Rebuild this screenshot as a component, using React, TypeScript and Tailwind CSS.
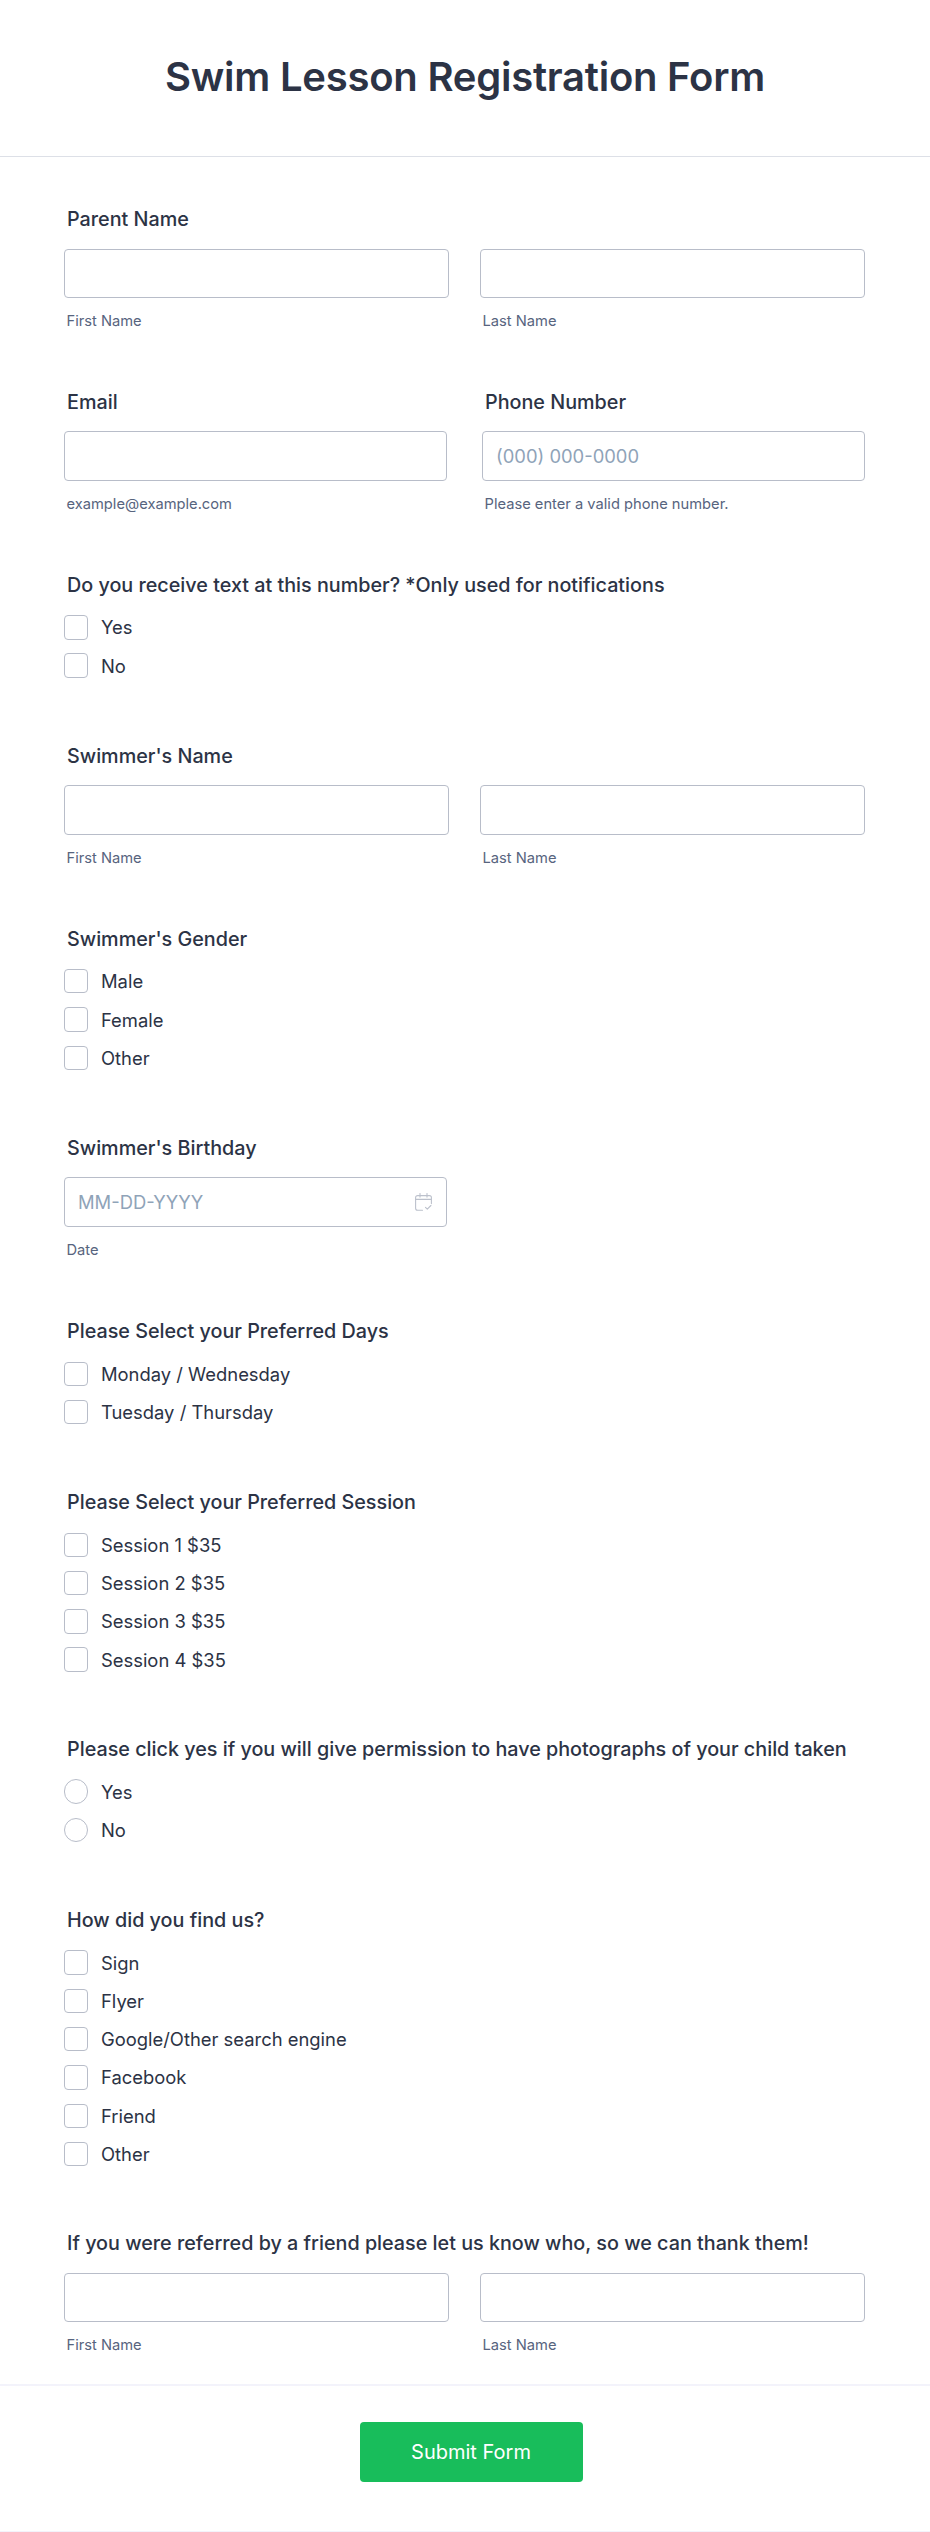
import React from "react";

const Label = ({ children, className = "" }: { children: React.ReactNode; className?: string }) => (
  <div className={`h-6 pl-[3px] text-[19.75px] leading-6 font-medium text-[#2c3345] whitespace-nowrap ${className}`}>{children}</div>
);

const Sub = ({ children }: { children: React.ReactNode }) => (
  <div className="mt-[13px] h-5 pl-[2.5px] text-[14.7px] leading-5 text-[#57647e] whitespace-nowrap">{children}</div>
);

const Input = ({ placeholder, children }: { placeholder?: string; children?: React.ReactNode }) => (
  <div className="mt-[17.5px] flex h-[49.4px] items-center justify-between rounded border border-[#b8bdc9] bg-white px-[13px] text-[18.4px] leading-6 text-[#8fa3b8]">
    <span>{placeholder}</span>
    {children}
  </div>
);

const NameRow = ({ className = "", title }: { className?: string; title: string }) => (
  <section className={className}>
    <Label>{title}</Label>
    <div className="grid grid-cols-[385px_385px] gap-x-[31px]">
      <div>
        <Input />
        <Sub>First Name</Sub>
      </div>
      <div>
        <Input />
        <Sub>Last Name</Sub>
      </div>
    </div>
  </section>
);

const Options = ({ items, round = false }: { items: string[]; round?: boolean }) => (
  <div className="mt-[18.5px] -mb-[0.4px] flex flex-col gap-[13.9px]">
    {items.map((item) => (
      <div key={item} className="flex h-[24.4px] items-center gap-[12.6px]">
        <span className={`h-[24.4px] w-[24.4px] border border-[#b8bdc9] bg-white ${round ? "rounded-full" : "rounded"}`} />
        <span className="text-[18.4px] leading-6 text-[#2c3345]">{item}</span>
      </div>
    ))}
  </div>
);

const CalendarIcon = () => (
  <svg width="17" height="18" viewBox="0 0 17 18" fill="none" stroke="#bcc1cc" strokeWidth="1.1" strokeLinecap="round" strokeLinejoin="round" className="mr-[1px]">
    <path d="M7.5 17.2H2.6a2 2 0 0 1-2-2V4.6a2 2 0 0 1 2-2h11.8a2 2 0 0 1 2 2v6" />
    <path d="M.6 6.4h15.8M5 .5v3.6M12 .5v3.6" />
    <path d="M10.5 14.3l1.8 1.9 3.6-3.7" />
  </svg>
);

export default function App() {
  return (
    <div className="min-h-[2532px] bg-white font-['Inter',sans-serif]">
      <header className="flex h-[157px] items-center justify-center border-b border-[#dde0e7] pb-[3px]">
        <h1 className="text-[40px] leading-[48px] font-semibold tracking-[-0.24px] text-[#2c3345]">Swim Lesson Registration Form</h1>
      </header>

      <main className="px-[64px]">
        <NameRow title="Parent Name" className="pt-[50px]" />

        <section className="mt-[59px] grid grid-cols-[383px_383px] gap-x-[35px]">
          <div>
            <Label>Email</Label>
            <Input />
            <Sub>example@example.com</Sub>
          </div>
          <div>
            <Label>Phone Number</Label>
            <Input placeholder="(000) 000-0000" />
            <Sub>Please enter a valid phone number.</Sub>
          </div>
        </section>

        <section className="mt-[58.9px]">
          <Label>Do you receive text at this number? *Only used for notifications</Label>
          <Options items={["Yes", "No"]} />
        </section>

        <NameRow title="Swimmer's Name" className="mt-[66.2px]" />

        <section className="mt-[59px]">
          <Label>Swimmer's Gender</Label>
          <Options items={["Male", "Female", "Other"]} />
        </section>

        <section className="mt-[66.3px] w-[383px]">
          <Label>Swimmer's Birthday</Label>
          <Input placeholder="MM-DD-YYYY">
            <CalendarIcon />
          </Input>
          <Sub>Date</Sub>
        </section>

        <section className="mt-[59.3px]">
          <Label>Please Select your Preferred Days</Label>
          <Options items={["Monday / Wednesday", "Tuesday / Thursday"]} />
        </section>

        <section className="mt-[66.2px]">
          <Label>Please Select your Preferred Session</Label>
          <Options items={["Session 1 $35", "Session 2 $35", "Session 3 $35", "Session 4 $35"]} />
        </section>

        <section className="mt-[65.6px]">
          <Label>Please click yes if you will give permission to have photographs of your child taken</Label>
          <Options round items={["Yes", "No"]} />
        </section>

        <section className="mt-[66.2px]">
          <Label>How did you find us?</Label>
          <Options items={["Sign", "Flyer", "Google/Other search engine", "Facebook", "Friend", "Other"]} />
        </section>

        <NameRow title="If you were referred by a friend please let us know who, so we can thank them!" className="mt-[65.6px]" />
      </main>

      <footer className="mt-[28.7px] flex h-[148px] justify-center border-t-2 border-b border-[#f3f3fb] pt-[36px] pl-[12px]">
        <button className="h-[60px] w-[223px] rounded bg-[#18bd5b] text-[20px] font-normal text-white">Submit Form</button>
      </footer>
    </div>
  );
}
